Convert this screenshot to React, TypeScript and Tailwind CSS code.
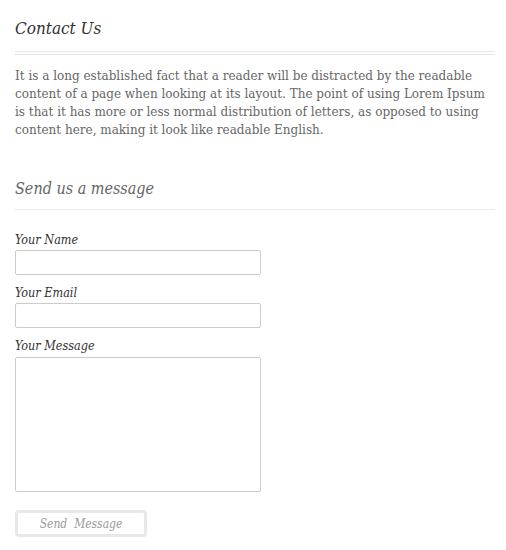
export default function App() {
  return (
    <div className="w-[506px] h-[550px] bg-white pl-[15px] pr-[11px] pt-[16px] font-['DejaVu_Serif',serif]">
      <h1 className="text-[17px] italic leading-[24px] text-[#333] font-['DejaVu_Serif_Condensed','DejaVu_Serif',serif]">
        Contact Us
      </h1>
      <div className="mt-[11px] flex flex-col gap-[2px]">
        <div className="h-px bg-[#e6e6e6]" />
        <div className="h-px bg-[#e6e6e6]" />
      </div>
      <p className="mt-[12px] text-[12px] leading-[18px] text-[#666]">
        It is a long established fact that a reader will be distracted by the readable content of a page when looking
        at its layout. The point of using Lorem Ipsum is that it has more or less normal distribution of letters, as
        opposed to using content here, making it look like readable English.
      </p>
      <h2 className="mt-[38px] text-[16px] italic leading-[24px] text-[#666] font-['DejaVu_Serif_Condensed','DejaVu_Serif',serif]">
        Send us a message
      </h2>
      <div className="mt-[8px] h-px bg-[#ebebeb]" />
      <form className="mt-[22px] flex flex-col font-['DejaVu_Serif_Condensed','DejaVu_Serif',serif]">
        <label className="text-[12.5px] italic leading-[16px] text-[#333]">Your Name</label>
        <input className="mt-[2px] w-[246px] h-[25px] border border-[#ccc] rounded-[2px] outline-none" />
        <label className="mt-[10px] text-[12.5px] italic leading-[16px] text-[#333]">Your Email</label>
        <input className="mt-[2px] w-[246px] h-[25px] border border-[#ccc] rounded-[2px] outline-none" />
        <label className="mt-[10px] text-[12.5px] italic leading-[16px] text-[#333]">Your Message</label>
        <textarea className="mt-[3px] w-[246px] h-[135px] border border-[#ccc] rounded-[2px] outline-none resize-none" />
        <button
          type="button"
          className="mt-[18px] w-[132px] h-[27px] border-[3px] border-[#e8e8e8] rounded-[4px] bg-white text-[12px] italic text-[#999] whitespace-pre"
        >
          {"Send  Message"}
        </button>
      </form>
    </div>
  );
}
